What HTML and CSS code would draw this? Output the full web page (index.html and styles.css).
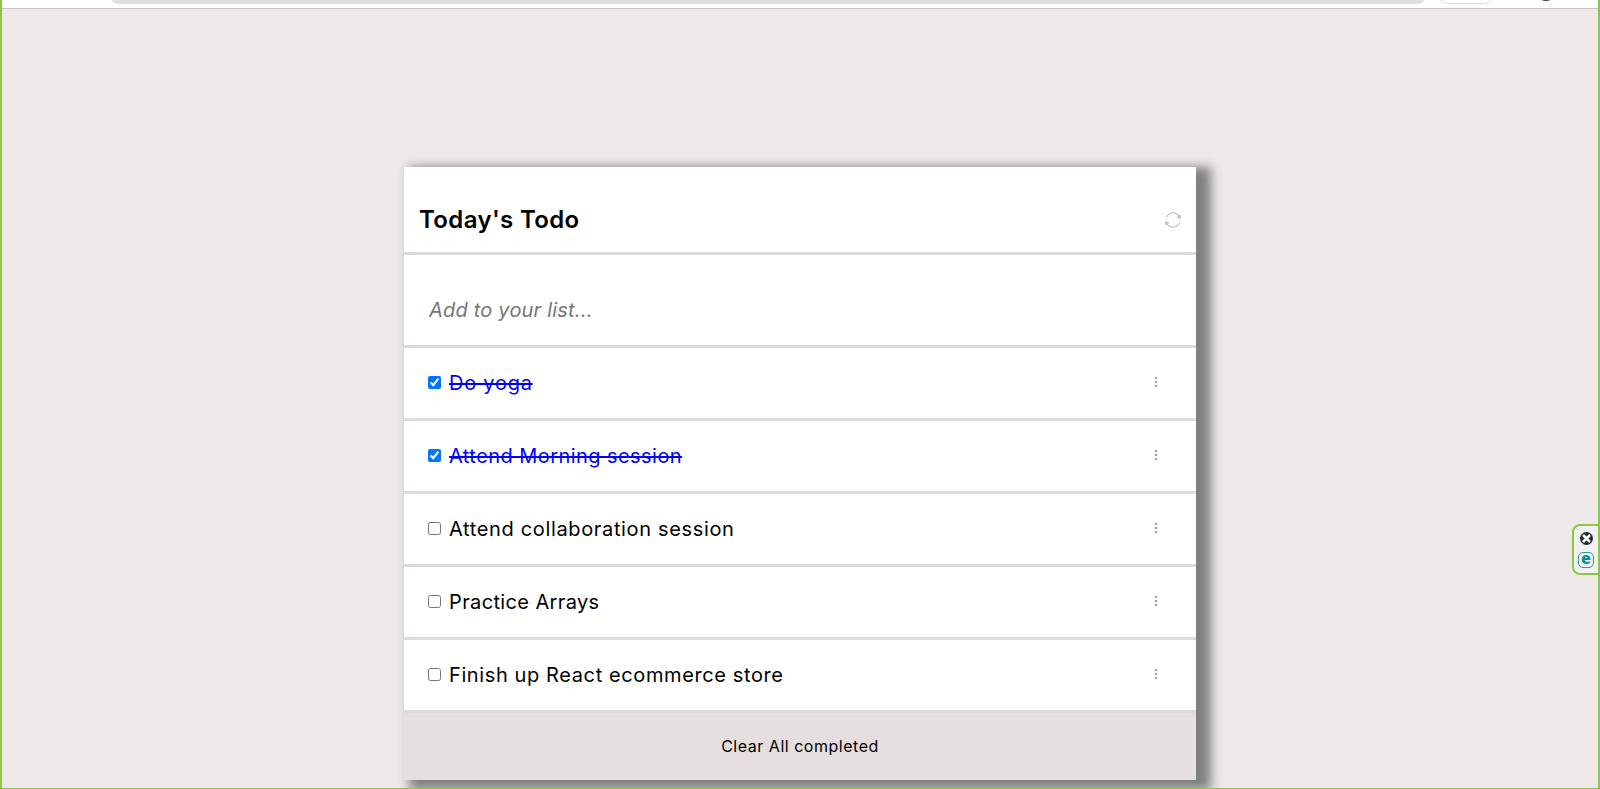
FILE: index.html
```html
<!DOCTYPE html>
<html lang="en">
<head>
<meta charset="utf-8">
<title>Today's Todo</title>
<link rel="stylesheet" href="styles.css">
</head>
<body>
<div class="toolbar">
  <div class="address"></div>
  <div class="pill"></div>
  <div class="avatar"></div>
</div>
<main class="card">
  <header class="head">
    <h1 class="title">Today's Todo</h1>
    <svg class="refresh" width="16" height="16" viewBox="0 0 16 16" fill="none" stroke="#bfbfbf" stroke-width="1.2">
      <path d="M1.2 5.6A7.2 7.2 0 0 1 14 4.3M14.8 10.4A7.2 7.2 0 0 1 2 11.7"/>
      <path fill="#bfbfbf" stroke="none" d="M15.8 2.3V7.2L11.4 5.3ZM.2 13.7V8.8L4.6 10.7Z"/>
    </svg>
  </header>
  <div class="entry"><input class="field" type="text" placeholder="Add to your list..."></div>
  <ul class="list">
    <li class="item"><input class="check" type="checkbox" checked><span class="label done yoga">Do yoga</span><span class="dots"><i></i><i></i><i></i></span></li>
    <li class="item"><input class="check" type="checkbox" checked><span class="label done morning">Attend Morning session</span><span class="dots"><i></i><i></i><i></i></span></li>
    <li class="item"><input class="check" type="checkbox"><span class="label collab">Attend collaboration session</span><span class="dots"><i></i><i></i><i></i></span></li>
    <li class="item"><input class="check" type="checkbox"><span class="label arrays">Practice Arrays</span><span class="dots"><i></i><i></i><i></i></span></li>
    <li class="item"><input class="check" type="checkbox"><span class="label store">Finish up React ecommerce store</span><span class="dots"><i></i><i></i><i></i></span></li>
  </ul>
  <button class="clear">Clear All completed</button>
</main>
<div class="frame"></div>
<aside class="side">
  <svg width="13" height="13" viewBox="0 0 13 13"><circle cx="6.5" cy="6.5" r="6.5" fill="#22272e"/><path d="M3 3L10 10M10 3L3 10" stroke="#fff" stroke-width="2.5"/></svg>
  <span class="badge">e</span>
</aside>
</body>
</html>
```
FILE: styles.css
```css
* { box-sizing: border-box; }
body {
  margin: 0;
  height: 789px;
  overflow: hidden;
  position: relative;
  background: #ede9e8;
  color: #000;
  font-family: Inter, "Open Sans", sans-serif;
}
.toolbar {
  height: 9px;
  background: #fff;
  border-bottom: 1px solid #c8c7c8;
  display: flex;
  align-items: flex-start;
  padding-left: 108px;
  overflow: hidden;
}
.address { width: 1320px; height: 24px; margin-top: -20px; border-radius: 12px; background: #dfdfdf; flex: none; }
.pill { width: 58px; height: 24px; margin: -20px 0 0 9px; border: 1px solid #dcdcdc; border-radius: 12px; flex: none; }
.avatar { width: 20px; height: 20px; margin: -19px 0 0 41px; border-radius: 50%; background: #5a3026; flex: none; }
.card {
  width: 792px;
  margin: 158px auto 0;
  background: #fff;
  box-shadow: 10px 5px 10px 5px #808080;
}
.head {
  height: 88px;
  border-bottom: 3px solid #dedada;
  display: flex;
  align-items: center;
  justify-content: space-between;
  padding: 20px 15px 0 15px;
}
.title { margin: 0; font-size: 24px; line-height: 36px; font-weight: 600; letter-spacing: 0.37px; white-space: nowrap; }
.refresh { display: block; margin-top: 1px; }
.entry { height: 93px; border-bottom: 3px solid #dedada; padding: 39px 20px 0 23px; }
.field {
  display: block;
  width: 100%;
  height: 32px;
  border: 0;
  padding: 0 2px;
  outline: none;
  font: italic 400 20px Inter, sans-serif;
  letter-spacing: 0.2px;
}
.field::placeholder { color: #757575; opacity: 1; }
.list { list-style: none; margin: 0; padding: 0; }
.item {
  height: 73px;
  border-bottom: 3px solid #dedada;
  display: flex;
  align-items: center;
  padding: 0 39px 0 24px;
}
.check { width: 13px; height: 13px; margin: 0 8px 1px 0; }
.label { font-size: 20px; line-height: 30px; font-weight: 400; white-space: nowrap; }
.yoga { letter-spacing: 0.75px; }
.morning { letter-spacing: 0.44px; }
.collab { letter-spacing: 0.65px; }
.arrays { letter-spacing: 0.37px; }
.store { letter-spacing: 0.61px; }
.done { color: #00f; text-decoration: line-through; text-decoration-thickness: 2px; }
.dots { margin: 0 0 2px auto; display: flex; flex-direction: column; gap: 2px; }
.dots i { width: 2px; height: 2px; background: #a5a5a5; box-shadow: 0 0 1px #a5a5a5; }
.clear {
  display: block;
  width: 100%;
  height: 67px;
  border: 0;
  padding: 0 0 2px;
  background: #e5dfdf;
  font: 400 16px Inter, sans-serif;
  letter-spacing: 0.52px;
  color: #000;
}
.frame {
  position: absolute;
  inset: 0;
  border: 2px solid #8dc63f;
  border-top: 0;
  border-bottom-width: 1px;
  pointer-events: none;
}
.side {
  position: absolute;
  right: 0;
  top: 524px;
  width: 28px;
  height: 51px;
  border: 2px solid #8dc63f;
  border-radius: 8px 0 0 8px;
  background: #f1f1f2;
  display: flex;
  flex-direction: column;
  align-items: center;
  padding: 6px 0 0;
  gap: 7px;
}
.badge {
  width: 16px;
  height: 16px;
  border: 1.5px solid #2a9a9e;
  border-radius: 5px;
  color: #168f95;
  font: 800 16px/11px "Open Sans", sans-serif;
  text-align: center;
}
```
